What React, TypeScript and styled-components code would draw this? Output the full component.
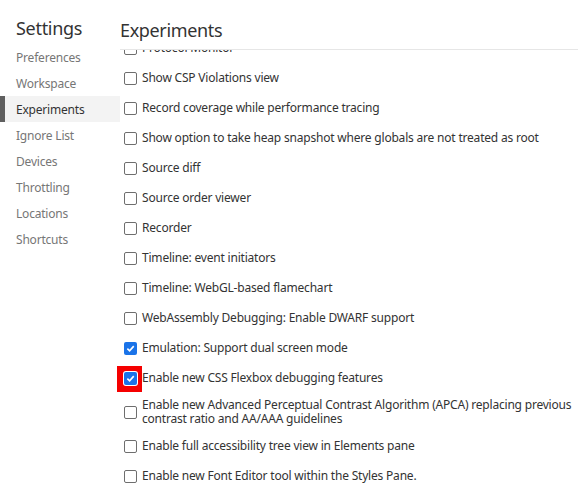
import React, { useLayoutEffect, useRef } from "react";
import styled, { createGlobalStyle } from "styled-components";

const Global = createGlobalStyle`
  html, body { margin: 0; padding: 0; background: #fff; }
  body { font-family: "Noto Sans", "DejaVu Sans", sans-serif; color: #333; letter-spacing: -0.2px; }
  * { box-sizing: border-box; }
`;

const Page = styled.div`
  display: flex;
  width: 578px;
  height: 491px;
  overflow: hidden;
  background: #fff;
`;

const Sidebar = styled.nav`
  width: 120px;
  flex: none;
  display: flex;
  flex-direction: column;
  position: relative;
  z-index: 0;
`;

const SidebarTitle = styled.h1`
  margin: 0;
  height: 44px;
  padding: 12px 0 0 16px;
  display: flex;
  align-items: center;
  font-size: 18px;
  font-weight: 400;
  letter-spacing: -0.3px;
  color: #333;
`;

const NavItem = styled.div<{ $active?: boolean }>`
  height: 26px;
  display: flex;
  align-items: center;
  padding-left: 16px;
  font-size: 12px;
  color: ${(p) => (p.$active ? "#333" : "#767676")};
  background: ${(p) => (p.$active ? "#f3f3f3" : "transparent")};
  box-shadow: ${(p) => (p.$active ? "inset 5px 0 0 #5f5f5f" : "none")};
`;

const Main = styled.main`
  flex: 1;
  display: flex;
  flex-direction: column;
  min-width: 0;
  position: relative;
  z-index: 1;
`;

const Header = styled.header`
  height: 50px;
  flex: none;
  border-bottom: 1px solid #e6e6e6;
  display: flex;
  align-items: center;
  padding-top: 10px;
`;

const HeaderTitle = styled.h2`
  margin: 0;
  font-size: 18px;
  font-weight: 400;
  letter-spacing: -0.35px;
  color: #333;
`;

const Scroller = styled.div`
  flex: 1;
  overflow: hidden;
  margin-left: -8px;
  padding-left: 8px;
`;

const Row = styled.label`
  display: flex;
  align-items: center;
  padding: 5px 0;
  font-size: 12px;
  color: #333;
`;

const BoxCell = styled.span`
  flex: none;
  width: 22px;
  height: 20px;
  display: flex;
  align-items: center;
  padding-left: 4px;
`;

const Box = styled.span<{ $checked?: boolean; $highlight?: boolean }>`
  position: relative;
  width: 13px;
  height: 13px;
  border-radius: 2px;
  border: ${(p) => (p.$checked ? "none" : "1px solid #6e6e6e")};
  background: ${(p) => (p.$checked ? "#1a73e8" : "#fff")};
  box-shadow: ${(p) => (p.$highlight ? "0 0 0 1px #fff" : "none")};
  display: flex;
  align-items: center;
  justify-content: center;
`;

const Highlight = styled.span`
  position: absolute;
  left: -7px;
  top: -6px;
  width: 25px;
  height: 26px;
  background: #f50000;
  z-index: -1;
`;

const BoxWrap = styled.span`
  position: relative;
  display: flex;
  z-index: 0;
`;

const Text = styled.span`
  line-height: 14px;
  white-space: nowrap;
`;

type Exp = { label: React.ReactNode; checked?: boolean; highlight?: boolean };

const experiments: Exp[] = [
  { label: "Protocol Monitor" },
  { label: "Show CSP Violations view" },
  { label: "Record coverage while performance tracing" },
  { label: "Show option to take heap snapshot where globals are not treated as root" },
  { label: "Source diff" },
  { label: "Source order viewer" },
  { label: "Recorder" },
  { label: "Timeline: event initiators" },
  { label: "Timeline: WebGL-based flamechart" },
  { label: "WebAssembly Debugging: Enable DWARF support" },
  { label: "Emulation: Support dual screen mode", checked: true },
  { label: "Enable new CSS Flexbox debugging features", checked: true, highlight: true },
  {
    label: (
      <>
        Enable new Advanced Perceptual Contrast Algorithm (APCA) replacing previous
        <br />
        contrast ratio and AA/AAA guidelines
      </>
    ),
  },
  { label: "Enable full accessibility tree view in Elements pane" },
  { label: "Enable new Font Editor tool within the Styles Pane." },
];

const Check = () => (
  <svg width="9" height="9" viewBox="0 0 10 10">
    <path d="M1.5 5.2 L4 7.6 L8.6 2.4" fill="none" stroke="#fff" strokeWidth="1.8" />
  </svg>
);

const Checkbox = ({ checked, highlight }: { checked?: boolean; highlight?: boolean }) => (
  <BoxCell>
    <BoxWrap>
      {highlight && <Highlight />}
      <Box $checked={checked} $highlight={highlight}>
        {checked && <Check />}
      </Box>
    </BoxWrap>
  </BoxCell>
);

const navItems = [
  "Preferences",
  "Workspace",
  "Experiments",
  "Ignore List",
  "Devices",
  "Throttling",
  "Locations",
  "Shortcuts",
];

export default function App() {
  const ref = useRef<HTMLDivElement>(null);
  useLayoutEffect(() => {
    if (ref.current) ref.current.scrollTop = 17;
  }, []);
  return (
    <Page>
      <Global />
      <Sidebar>
        <SidebarTitle>Settings</SidebarTitle>
        {navItems.map((n) => (
          <NavItem key={n} $active={n === "Experiments"}>
            {n}
          </NavItem>
        ))}
      </Sidebar>
      <Main>
        <Header>
          <HeaderTitle>Experiments</HeaderTitle>
        </Header>
        <Scroller ref={ref}>
          {experiments.map((e, i) => (
            <Row key={i}>
              <Checkbox checked={e.checked} highlight={e.highlight} />
              <Text>{e.label}</Text>
            </Row>
          ))}
        </Scroller>
      </Main>
    </Page>
  );
}
